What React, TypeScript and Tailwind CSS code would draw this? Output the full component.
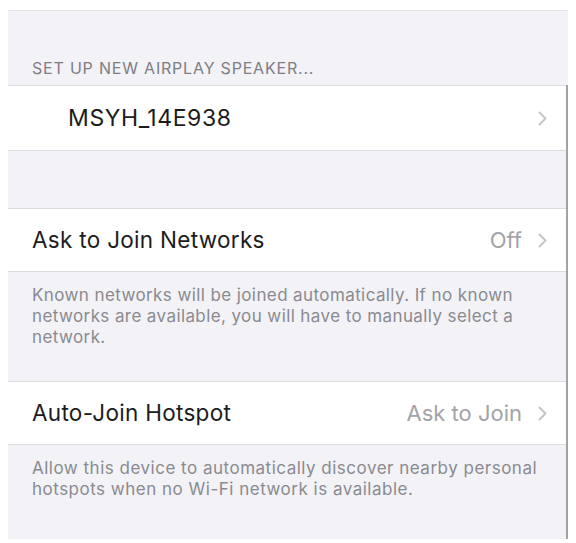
import React from "react";

const font = { fontFamily: "Inter, 'Liberation Sans', sans-serif" };

function Chevron() {
  return (
    <svg width="9" height="15" viewBox="0 0 9 15" className="ml-[16px] shrink-0">
      <path d="M1.5 1.5 L7.5 7.5 L1.5 13.5" fill="none" stroke="#c5c5ca" strokeWidth="2" strokeLinecap="round" strokeLinejoin="round" />
    </svg>
  );
}

type RowProps = {
  label: string;
  value?: string;
  indent?: boolean;
  className?: string;
};

function Row({ label, value, indent, className }: RowProps) {
  return (
    <div
      className={`flex items-center bg-white border-y border-[#dcdce0] pr-[19px] ${
        indent ? "pl-[60px]" : "pl-[24px]"
      } ${className ?? ""}`}
    >
      <span
        className={`flex-1 text-[#1c1c1e] ${
          indent ? "text-[23px] tracking-[0.6px]" : "text-[22.5px] tracking-[0.3px]"
        }`}
      >
        {label}
      </span>
      {value ? <span className="text-[22px] text-[#a3a3a8]">{value}</span> : null}
      <Chevron />
    </div>
  );
}

export default function App() {
  return (
    <div className="min-h-screen bg-white px-2 pt-[10px] pb-[3px]" style={font}>
      <div className="bg-[#f2f2f7] border-t border-[#e4e4e8]">
        <div className="flex h-[74px] items-end px-[24px] pb-[5px]">
          <span className="text-[16px] tracking-[0.8px] text-[#7e7e83]">
            SET UP NEW AIRPLAY SPEAKER...
          </span>
        </div>
        <div className="border-r-2 border-[#a2a2a6]">
          <Row label="MSYH_14E938" indent className="h-[66px]" />
          <div className="h-[57px]" />
          <Row label="Ask to Join Networks" value="Off" className="h-[64px]" />
          <div className="h-[109px] pl-[24px] pr-[40px] pt-[13px] text-[17px] leading-[21px] tracking-[0.4px] text-[#8a8a8f]">
            Known networks will be joined automatically. If no known networks are available, you
            will have to manually select a network.
          </div>
          <Row label="Auto-Join Hotspot" value="Ask to Join" className="h-[64px]" />
          <div className="h-[94px] pl-[24px] pr-[24px] pt-[13px] text-[17px] leading-[21px] tracking-[0.5px] text-[#8a8a8f]">
            Allow this device to automatically discover nearby personal hotspots when no Wi-Fi
            network is available.
          </div>
        </div>
      </div>
    </div>
  );
}
